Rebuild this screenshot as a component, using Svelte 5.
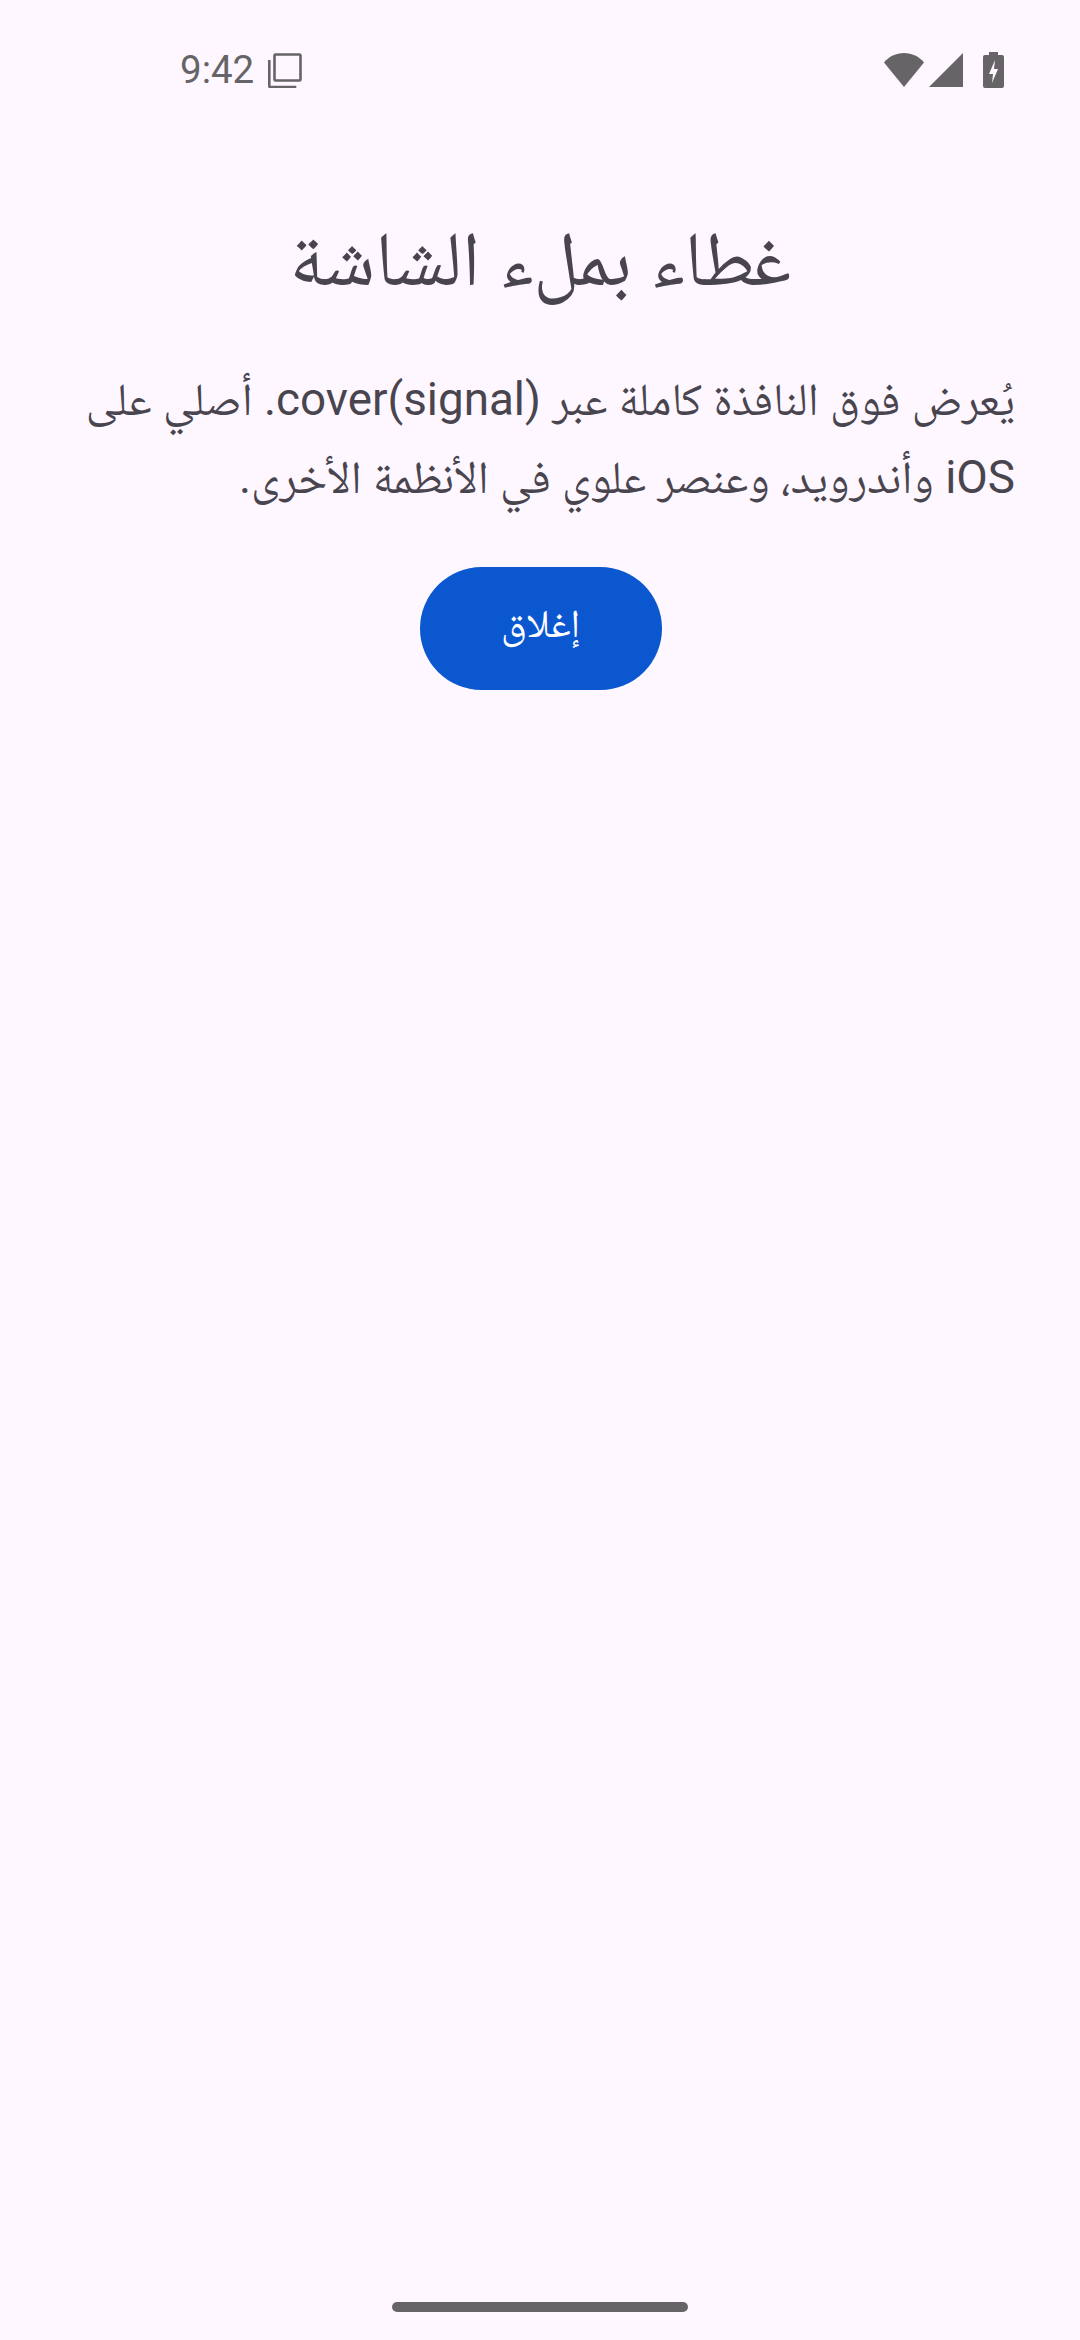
<script>
  const title = 'غطاء بملء الشاشة';
  const body = 'يُعرض فوق النافذة كاملة عبر (cover(signal. أصلي على iOS وأندرويد، وعنصر علوي في الأنظمة الأخرى.';
</script>

<div class="screen">
  <header class="status">
    <div class="left">
      <span class="time">9:42</span>
      <svg class="copy" viewBox="0 0 36 36" width="36" height="36" aria-hidden="true">
        <path d="M9.500 2.500h24a1 1 0 0 1 1 1v24a1 1 0 0 1-1 1h-24a1 1 0 0 1-1-1v-24a1 1 0 0 1 1-1z" fill="none" stroke="currentColor" stroke-width="2.600" />
        <path d="M3.300 8v26a1 1 0 0 0 1 1h26" fill="none" stroke="currentColor" stroke-width="2.600" />
      </svg>
    </div>
    <div class="right">
      <svg viewBox="0 0 40 34" width="40" height="34" aria-hidden="true"><path d="M0 9.500C5 3.500 12 0 20 0s15 3.500 20 9.500L20 34z" fill="currentColor" /></svg>
      <svg class="signal" viewBox="0 0 34 34" width="34" height="34" aria-hidden="true"><path d="M34 0v34H0z" fill="currentColor" /></svg>
      <svg class="battery" viewBox="0 0 21 36" width="21" height="36" aria-hidden="true">
        <path d="M6 0h9v3h4a2 2 0 0 1 2 2v29a2 2 0 0 1-2 2H2a2 2 0 0 1-2-2V5a2 2 0 0 1 2-2h4z" fill="currentColor" />
        <path d="M12 8l-6 14h4l-1 9 6-14h-4z" fill="#fef7ff" />
      </svg>
    </div>
  </header>

  <main dir="rtl">
    <h1>{title}</h1>
    <p>{body}</p>
    <button type="button">إغلاق</button>
  </main>

  <div class="handle"></div>
</div>

<style>
  :global(body) {
    margin: 0;
    background: #fef7ff;
  }

  .screen {
    height: 2340px;
    display: flex;
    flex-direction: column;
    font-family: Roboto, "Noto Naskh Arabic", sans-serif;
    color: #49454f;
    overflow: hidden;
  }

  .status {
    height: 140px;
    box-sizing: border-box;
    padding: 0 76px 0 180px;
    display: flex;
    justify-content: space-between;
    align-items: center;
    color: #666467;
    flex: none;
  }

  .left,
  .right {
    display: flex;
    align-items: center;
  }

  .time {
    font-size: 38.500px;
    line-height: 1;
  }

  .copy {
    margin-left: 12px;
  }

  .signal {
    margin-left: 5px;
  }

  .battery {
    margin-left: 20px;
  }

  main {
    flex: 1;
    padding: 75px 65px 0 66px;
    display: flex;
    flex-direction: column;
  }

  h1 {
    margin: 0;
    font-size: 77px;
    font-weight: 400;
    line-height: 88px;
    text-align: center;
  }

  p {
    margin: 58px 0 0;
    font-size: 45.800px;
    line-height: 77.500px;
  }

  button {
    margin: 50.500px 0 0;
    align-self: center;
    width: 242px;
    height: 123px;
    border: 0;
    border-radius: 62px;
    background: #0b57d0;
    color: #fff;
    font: inherit;
    font-size: 39.500px;
  }

  .handle {
    flex: none;
    width: 296px;
    height: 10px;
    margin: 0 auto 28px;
    border-radius: 5px;
    background: #666467;
  }
</style>
